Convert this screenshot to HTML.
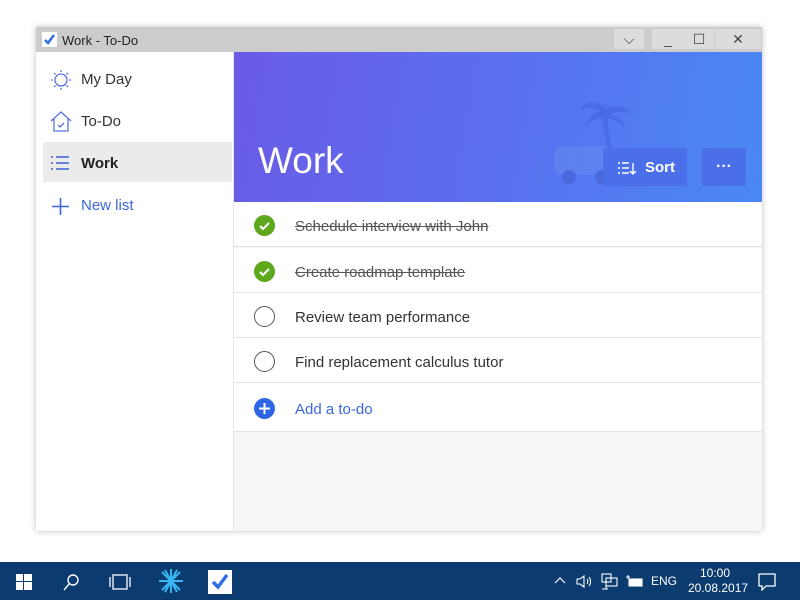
<!DOCTYPE html>
<html><head><meta charset="utf-8"><style>
*{margin:0;padding:0;box-sizing:border-box}
body{width:800px;height:600px;background:#fff;position:relative;overflow:hidden;font-family:"Liberation Sans",sans-serif}
.win{position:absolute;left:36px;top:27px;width:726px;height:504px;box-shadow:0 0 6px rgba(0,0,0,.25);background:#fff}
.tb{position:absolute;left:0;top:0;width:726px;height:25px;background:#cccccc;font-size:13px;color:#222}
.tb .t{position:absolute;left:26px;top:6px}
.btn{position:absolute;top:2px;height:20px;background:#dcdcdc;color:#444;font-size:14px;text-align:center;line-height:20px}
.side{position:absolute;left:0;top:25px;width:198px;height:479px;background:#fff;border-right:1px solid #e6e6e6}
.it{position:absolute;left:7px;width:189px;height:40px;font-size:15px;color:#333}
.it span{position:absolute;left:38px;top:14px}
.hdr{position:absolute;left:198px;top:25px;width:528px;height:150px;background:linear-gradient(100deg,#6b5be6 0%,#5a6ff0 50%,#4a88f5 100%)}
.hdr h1{position:absolute;left:24px;top:88px;font-weight:normal;color:#fff;font-size:37px}
.sort{position:absolute;left:369px;top:96px;width:84px;height:38px;background:#4a6fe8;color:#fff;font-size:15px;font-weight:bold;border-radius:2px}
.more{position:absolute;left:468px;top:96px;width:44px;height:38px;background:#4a6fe8;color:#fff;font-size:16px;text-align:center;line-height:38px;border-radius:2px;font-weight:bold}
.list{position:absolute;left:198px;top:175px;width:528px;height:329px;background:#f6f6f8}
.row{position:absolute;left:0;width:528px;height:45px;background:#fff;border-bottom:1px solid #e3e3e3;font-size:15px;color:#333}
.row span{position:absolute;left:61px;top:16px}
.c{position:absolute;left:20px;top:13px;width:21px;height:21px;border-radius:50%}
.done{background:#5ea81d}
.open{border:1.5px solid #555}
.s{text-decoration:line-through;color:#555}
.task{position:absolute;left:0;top:562px;width:800px;height:38px;background:#0c3b6f;color:#fff}
</style></head><body>
<div class="win">
 <div class="tb">
  <svg style="position:absolute;left:6px;top:5px" width="15" height="15"><rect width="15" height="15" fill="#fff"/><path d="M3 8l3 3 6-8" stroke="#2f6ee6" stroke-width="2.5" fill="none"/></svg>
  <span class="t">Work - To-Do</span>
  <div class="btn" style="left:578px;width:30px">⌵</div>
  <div class="btn" style="left:616px;width:32px">_</div>
  <div class="btn" style="left:648px;width:30px">☐</div>
  <div class="btn" style="left:679px;width:46px">✕</div>
 </div>
 <div class="side">
  <div class="it" style="top:5px"><svg style="position:absolute;left:7px;top:12px" width="22" height="22" fill="none" stroke="#5a74e0" stroke-width="1.3"><circle cx="11" cy="11" r="6"/><path d="M11 1v2M11 19v2M1 11h2M19 11h2M4 4l1.5 1.5M16.5 16.5L18 18M4 18l1.5-1.5M16.5 5.5L18 4"/></svg><span>My Day</span></div>
  <div class="it" style="top:47px"><svg style="position:absolute;left:6px;top:11px" width="24" height="24" fill="none" stroke="#5a74e0" stroke-width="1.3"><path d="M2 11L12 2l10 9M5 9v12h14V9"/><path d="M9 15l2 2 4-4"/></svg><span>To-Do</span></div>
  <div class="it" style="top:90px"><div style="position:absolute;inset:0;background:#ebebeb"></div><svg style="position:absolute;left:7px;top:13px" width="20" height="16" stroke="#3a5fd8" stroke-width="1.5"><path d="M6 2h13M6 8h13M6 14h13M1 2h2M1 8h2M1 14h2"/></svg><span style="font-weight:bold;color:#222;top:13px">Work</span></div>
  <div class="it" style="top:131px;color:#3a66e0"><svg style="position:absolute;left:9px;top:15px" width="17" height="17" stroke="#3a66e0" stroke-width="1.6"><path d="M8.5 0v17M0 8.5h17"/></svg><span>New list</span></div>
 </div>
 <div class="hdr">
  <svg style="position:absolute;left:290px;top:40px" width="140" height="95" opacity=".45"><path d="M80 15c-10-8-20-5-25 3 8-3 15-2 22 1-8 2-14 8-16 15 6-5 12-8 18-8-1 10 5 30 10 55h4c-5-25-10-45-9-55 7 2 14 7 18 12-1-8-8-14-16-16 7-3 14-3 22 0-6-8-18-10-26-5 0-5 2-10 4-12z" fill="#3d5fd8"/><rect x="30" y="55" width="60" height="28" rx="8" fill="#6d8ff0"/><circle cx="45" cy="85" r="7" fill="#3d56c8"/><circle cx="78" cy="85" r="7" fill="#3d56c8"/><rect x="18" y="50" width="5" height="40" rx="2" fill="#5674e5"/></svg>
  <h1>Work</h1>
  <div class="sort"><svg style="position:absolute;left:14px;top:13px" width="20" height="15" stroke="#fff" stroke-width="1.4"><path d="M1 2h2M1 7h2M1 12h2M5 2h7M5 7h7M5 12h7M16 2v11M13 10l3 3 3-3" fill="none"/></svg><span style="position:absolute;left:42px;top:11px">Sort</span></div>
  <div class="more">···</div>
 </div>
 <div class="list">
  <div class="row" style="top:0"><div class="c done"><svg width="21" height="21"><path d="M6 11l3 3 6-6" stroke="#fff" stroke-width="2" fill="none"/></svg></div><span class="s">Schedule interview with John</span></div>
  <div class="row" style="top:46px"><div class="c done"><svg width="21" height="21"><path d="M6 11l3 3 6-6" stroke="#fff" stroke-width="2" fill="none"/></svg></div><span class="s">Create roadmap template</span></div>
  <div class="row" style="top:91px"><div class="c open"></div><span>Review team performance</span></div>
  <div class="row" style="top:136px"><div class="c open"></div><span>Find replacement calculus tutor</span></div>
  <div class="row" style="top:181px;height:49px"><div class="c" style="background:#2f66e6;top:15px"><svg width="21" height="21"><path d="M10.5 5v11M5 10.5h11" stroke="#fff" stroke-width="2"/></svg></div><span style="color:#3a66e0;top:18px">Add a to-do</span></div>
 </div>
</div>
<div class="task">
 <svg style="position:absolute;left:16px;top:12px" width="16" height="16" fill="#fff"><rect width="7" height="7"/><rect x="8" width="8" height="7"/><rect y="8" width="7" height="8"/><rect x="8" y="8" width="8" height="8"/></svg>
 <svg style="position:absolute;left:62px;top:11px" width="18" height="18" fill="none" stroke="#fff" stroke-width="1.4"><circle cx="11" cy="7" r="5"/><path d="M7.5 10.5L2 17"/></svg>
 <svg style="position:absolute;left:109px;top:12px" width="22" height="16" fill="none" stroke="#fff" stroke-width="1.3"><rect x="4" y="1" width="14" height="14"/><path d="M1 3v10M21 3v10"/></svg>
 <svg style="position:absolute;left:158px;top:6px" width="26" height="26" stroke="#37b5f5" stroke-width="2"><path d="M13 1v24M1 13h24M4 4l18 18M22 4L4 22M7 2l12 22M19 2L7 24"/></svg>
 <svg style="position:absolute;left:208px;top:8px" width="24" height="24"><rect width="24" height="24" fill="#fff"/><path d="M5 12l5 5 9-12" stroke="#2f6ee6" stroke-width="3.5" fill="none"/></svg>
 <svg style="position:absolute;left:554px;top:14px" width="12" height="8" fill="none" stroke="#fff" stroke-width="1.2"><path d="M1 7l5-5 5 5"/></svg>
 <svg style="position:absolute;left:576px;top:12px" width="18" height="15" fill="none" stroke="#fff" stroke-width="1.1"><path d="M1 5h3l4-3v11l-4-3H1z M11 5c1 1 1 4 0 5 M13 3c2 2 2 7 0 9"/></svg>
 <svg style="position:absolute;left:601px;top:11px" width="17" height="17" fill="none" stroke="#fff" stroke-width="1.1"><rect x="1" y="1" width="9" height="8"/><rect x="5" y="5" width="11" height="8"/><path d="M5 13v3M1 16h6"/></svg>
 <svg style="position:absolute;left:625px;top:12px" width="18" height="14" fill="none" stroke="#fff" stroke-width="1.1"><path d="M3 1v4M1 3h4"/><rect x="4" y="5" width="13" height="7" fill="#fff"/></svg>
 <div style="position:absolute;left:651px;top:12px;font-size:12px">ENG</div>
 <div style="position:absolute;left:688px;top:4px;font-size:12px;text-align:center;width:54px;line-height:15px">10:00<br>20.08.2017</div>
 <svg style="position:absolute;left:758px;top:11px" width="18" height="18" fill="none" stroke="#fff" stroke-width="1.3"><path d="M1 1h16v12H8l-4 4v-4H1z"/></svg>
</div>
</body></html>
